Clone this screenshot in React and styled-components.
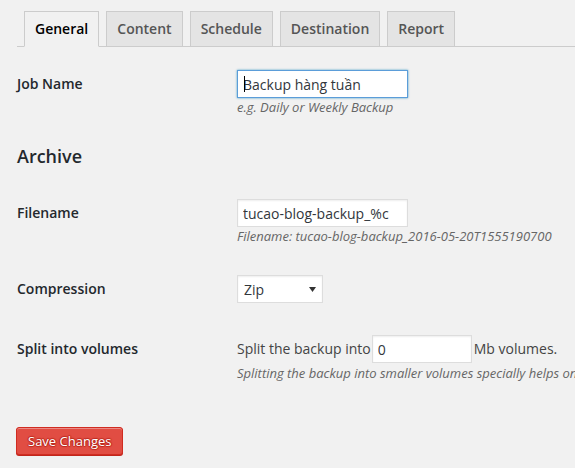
import React from 'react'
import styled, { createGlobalStyle } from 'styled-components'

const GlobalStyle = createGlobalStyle`
  html, body {
    margin: 0;
    padding: 0;
    background: #f1f1f1;
    overflow: hidden;
  }
  body {
    font-family: "Open Sans", "Noto Sans", sans-serif;
    font-size: 14px;
    color: #444;
  }
`

const Page = styled.div`
  width: 575px;
  height: 468px;
  overflow: hidden;
  padding: 11px 0 0 17px;
  box-sizing: border-box;
`

const TabBar = styled.nav`
  display: flex;
  align-items: stretch;
  gap: 7px;
  padding-left: 7px;
  border-bottom: 1px solid #ccc;
  margin-right: -40px;
`

const Tab = styled.a`
  display: block;
  padding: 5px 10px;
  line-height: 24px;
  font-size: 14px;
  font-weight: 600;
  border: 1px solid #ccc;
  border-bottom: ${p => (p.$active ? '1px solid #f1f1f1' : 'none')};
  margin-bottom: ${p => (p.$active ? '-1px' : '0')};
  background: ${p => (p.$active ? '#f1f1f1' : '#e4e4e4')};
  color: ${p => (p.$active ? '#000' : '#555')};
  text-decoration: none;
  white-space: nowrap;
`

const Form = styled.form`
  margin-top: 8px;
`

const Row = styled.div`
  display: grid;
  grid-template-columns: 220px 1fr;
`

const Label = styled.label`
  padding-top: 20px;
  line-height: 1.3;
  font-weight: 600;
  color: #23282d;
`

const Field = styled.div`
  padding: 15px 0 ${p => p.$bottom ?? 15}px;
  line-height: 1.3;
  white-space: nowrap;
`

const Description = styled.span`
  display: block;
  margin-top: ${p => p.$gap ?? 1}px;
  font-size: 13px;
  line-height: 17px;
  font-style: italic;
  color: #666;
`

const CaretWrap = styled.span`
  position: relative;
  display: inline-block;
`

const Caret = styled.span`
  position: absolute;
  left: 7px;
  top: 6px;
  width: 1px;
  height: 16px;
  background: #000;
`

const TextInput = styled.input`
  box-sizing: border-box;
  display: block;
  width: ${p => p.$width}px;
  height: 28px;
  margin: 0;
  padding: 3px 5px;
  border: 1px solid ${p => (p.$focus ? '#5b9dd9' : '#ddd')};
  box-shadow: ${p =>
    p.$focus ? '0 0 2px rgba(30, 140, 190, 0.8)' : 'inset 0 1px 2px rgba(0, 0, 0, 0.07)'};
  background: #fff;
  color: #32373c;
  font-family: "Open Sans", "Noto Sans", sans-serif;
  font-size: 14px;
  outline: none;
`

const VolumeInput = styled(TextInput)`
  margin: 0 2px 0 1px;
`

const SectionTitle = styled.h3`
  margin: 12px 0 16px;
  font-size: 18px;
  line-height: 24px;
  font-weight: 600;
  color: #23282d;
`

const SelectWrap = styled.span`
  position: relative;
  display: inline-block;
  margin-bottom: 2px;
`

const Select = styled.select`
  appearance: none;
  -webkit-appearance: none;
  box-sizing: border-box;
  display: block;
  width: 86px;
  height: 28px;
  margin: 0;
  padding: 2px 6px;
  border: 1px solid #ddd;
  box-shadow: inset 0 1px 2px rgba(0, 0, 0, 0.07);
  border-radius: 0;
  background: #fff;
  color: #32373c;
  font-family: "Open Sans", "Noto Sans", sans-serif;
  font-size: 14px;
  outline: none;
`

const Arrow = styled.svg`
  position: absolute;
  right: 7px;
  top: 12px;
  pointer-events: none;
`

const Inline = styled.div`
  display: flex;
  align-items: center;
`

const SubmitBar = styled.p`
  margin: 30px 0 0;
  padding: 0;
`

const PrimaryButton = styled.button`
  box-sizing: border-box;
  height: 28px;
  margin-left: -1px;
  padding: 0 11px 1px;
  line-height: 26px;
  font-family: "Open Sans", "Noto Sans", sans-serif;
  font-size: 13px;
  color: #fff;
  background: #e14d43;
  border: 1px solid #d02c21;
  border-radius: 3px;
  box-shadow: inset 0 1px 0 #ec8a85, 0 1px 0 #c0261c;
  text-shadow: 0 -1px 1px #ba281e, 1px 0 1px #ba281e, 0 1px 1px #ba281e, -1px 0 1px #ba281e;
  cursor: pointer;
`

const tabs = ['General', 'Content', 'Schedule', 'Destination', 'Report']

export default function App() {
  return (
    <Page>
      <GlobalStyle />
      <TabBar>
        {tabs.map((t, i) => (
          <Tab key={t} href="#" $active={i === 0}>{t}</Tab>
        ))}
      </TabBar>

      <Form onSubmit={e => e.preventDefault()}>
        <Row>
          <Label>Job Name</Label>
          <Field $bottom={16}>
            <CaretWrap>
              <TextInput $width={171} $focus defaultValue="Backup hàng tuần" />
              <Caret />
            </CaretWrap>
            <Description>e.g. Daily or Weekly Backup</Description>
          </Field>
        </Row>

        <SectionTitle>Archive</SectionTitle>

        <Row>
          <Label>Filename</Label>
          <Field>
            <TextInput $width={171} defaultValue="tucao-blog-backup_%c" />
            <Description>Filename: tucao-blog-backup_2016-05-20T1555190700</Description>
          </Field>
        </Row>

        <Row>
          <Label>Compression</Label>
          <Field>
            <SelectWrap>
              <Select defaultValue="zip">
                <option value="zip">Zip</option>
                <option value="tar">Tar</option>
                <option value="targz">Tar GZip</option>
              </Select>
              <Arrow width="7" height="5" viewBox="0 0 7 5">
                <path d="M0 0h7L3.5 5z" fill="#333" />
              </Arrow>
            </SelectWrap>
          </Field>
        </Row>

        <Row>
          <Label>Split into volumes</Label>
          <Field>
            <Inline>
              Split the backup into
              <VolumeInput $width={100} defaultValue="0" />
              Mb volumes.
            </Inline>
            <Description $gap={2}>
              Splitting the backup into smaller volumes specially helps on hosting with limited disk space.
            </Description>
          </Field>
        </Row>

        <SubmitBar>
          <PrimaryButton type="submit">Save Changes</PrimaryButton>
        </SubmitBar>
      </Form>
    </Page>
  )
}
